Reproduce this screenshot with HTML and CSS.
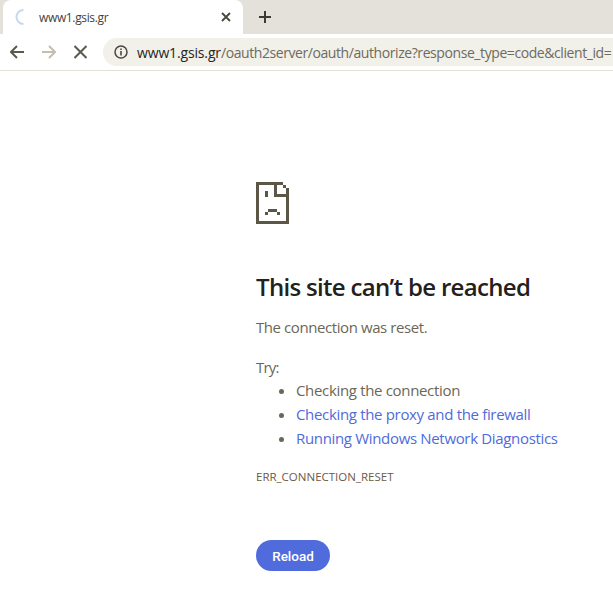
FILE: index.html
```html
<!DOCTYPE html>
<html lang="en">
<head>
    <meta charset="UTF-8">
    <meta name="viewport" content="width=device-width, initial-scale=1.0">
    <title>www1.gsis.gr</title>
    <link rel="stylesheet" href="styles.css">
</head>
<body>
    <div class="tabstrip">
        <div class="tab">
            <svg class="spinner" width="16" height="16" viewBox="0 0 16 16"><path d="M8.5 1 A7 7 0 0 0 8.5 15" fill="none" stroke="#c9d8f2" stroke-width="2"/></svg>
            <span class="tab-title">www1.gsis.gr</span>
            <svg class="tab-close" width="10" height="10" viewBox="0 0 10 10"><path d="M1 1 L9 9 M9 1 L1 9" stroke="#4a463c" stroke-width="1.8"/></svg>
        </div>
        <svg class="new-tab" width="14" height="14" viewBox="0 0 14 14"><path d="M7 1 V13 M1 7 H13" stroke="#3c3a33" stroke-width="2"/></svg>
    </div>

    <div class="toolbar">
        <svg class="nav-icon" width="14" height="14" viewBox="0 0 14 14"><path d="M14 7 H1.5 M7 1 L1 7 L7 13" fill="none" stroke="#5c5a50" stroke-width="2"/></svg>
        <svg class="nav-icon" width="14" height="14" viewBox="0 0 14 14"><path d="M0 7 H12.5 M7 1 L13 7 L7 13" fill="none" stroke="#c2bfb0" stroke-width="2"/></svg>
        <svg class="nav-icon stop-icon" width="13" height="14" viewBox="0 0 13 14"><path d="M0.5 1 L12.5 13 M12.5 1 L0.5 13" stroke="#5c5a50" stroke-width="2"/></svg>
        <div class="omnibox">
            <svg class="info-icon" width="14" height="14" viewBox="0 0 14 14"><circle cx="7" cy="7" r="6" fill="none" stroke="#4a483f" stroke-width="1.5"/><path d="M7 6 V10.5 M7 3.4 V5" stroke="#4a483f" stroke-width="1.6"/></svg>
            <span class="url"><span class="host">www1.gsis.gr</span>/oauth2server/oauth/authorize?response_type=code&amp;client_id=</span>
        </div>
    </div>

    <div class="content">
        <svg class="sad-icon" width="33" height="42" viewBox="0 0 11 14" shape-rendering="crispEdges">
            <path fill="#5c5646" fill-rule="evenodd" d="M0 0H9V1H7V4H10V2H11V14H0ZM1 1V13H10V5H6V1Z"/>
            <path fill="#5c5646" d="M9 1H10V2H9ZM3 3H4V5H3ZM4 9H7V10H4ZM3 10H4V11H3ZM7 10H8V11H7Z"/>
        </svg>
        <h1>This site can’t be reached</h1>
        <p class="summary">The connection was reset.</p>
        <p class="try">Try:</p>
        <ul class="suggestions">
            <li>Checking the connection</li>
            <li><a href="#">Checking the proxy and the firewall</a></li>
            <li><a href="#">Running Windows Network Diagnostics</a></li>
        </ul>
        <div class="error-code">ERR_CONNECTION_RESET</div>
        <button class="reload">Reload</button>
    </div>
</body>
</html>
```

FILE: styles.css
```css
html, body {
    margin: 0;
    padding: 0;
    height: 100%;
    overflow: hidden;
    background-color: #ffffff;
    font-family: "Open Sans", "Noto Sans", sans-serif;
}

.tabstrip {
    display: flex;
    align-items: center;
    height: 34px;
    background-color: #e3e1da;
}

.tab {
    display: flex;
    align-items: center;
    width: 240px;
    height: 34px;
    margin-left: 3px;
    padding: 0 12px;
    box-sizing: border-box;
    background-color: #ffffff;
    border-radius: 8px 8px 0 0;
}

.spinner {
    margin-right: 8px;
}

.tab-title {
    flex: 1;
    font-size: 12px;
    letter-spacing: -0.35px;
    color: #45433b;
}

.new-tab {
    margin-left: 15px;
}

.toolbar {
    display: flex;
    align-items: center;
    height: 36px;
    padding-left: 10px;
    border-bottom: 1px solid #e3e1d5;
}

.nav-icon {
    margin-right: 18px;
    flex: none;
}

.stop-icon {
    margin-right: 16px;
}

.omnibox {
    display: flex;
    align-items: center;
    flex: 1;
    min-width: 0;
    height: 28px;
    padding-left: 11px;
    background-color: #f1f0e9;
    border-radius: 14px 0 0 14px;
    overflow: hidden;
    white-space: nowrap;
}

.info-icon {
    flex: none;
    margin-right: 9px;
}

.url {
    font-size: 14px;
    letter-spacing: -0.42px;
    color: #6e6b5f;
}

.host {
    letter-spacing: -0.15px;
    color: #26251f;
}

.content {
    padding: 111px 0 0 256px;
    color: #6b6757;
    font-size: 15px;
    letter-spacing: -0.33px;
}

.sad-icon {
    display: block;
}

h1 {
    margin: 46px 0 0;
    font-size: 24px;
    line-height: 34px;
    font-weight: 600;
    letter-spacing: -0.68px;
    color: #23211c;
}

.summary {
    margin: 11px 0 0;
    line-height: 24px;
    letter-spacing: -0.42px;
}

.try {
    margin: 16px 0 0;
    line-height: 24px;
    letter-spacing: -0.8px;
}

.suggestions {
    margin: -1px 0 0;
    padding-left: 40px;
}

.suggestions li {
    line-height: 24px;
}

.suggestions a {
    color: #4f6bdc;
    text-decoration: none;
}

.error-code {
    margin-top: 15px;
    font-size: 11.5px;
    line-height: 24px;
    letter-spacing: 0;
    color: #6b5a45;
}

.reload {
    display: block;
    width: 74px;
    height: 31px;
    margin-top: 51px;
    padding: 0;
    border: none;
    border-radius: 16px;
    background-color: #4f6bdc;
    color: #ffffff;
    font-family: Roboto, sans-serif;
    font-size: 13.5px;
    font-weight: 500;
    cursor: pointer;
}
```
